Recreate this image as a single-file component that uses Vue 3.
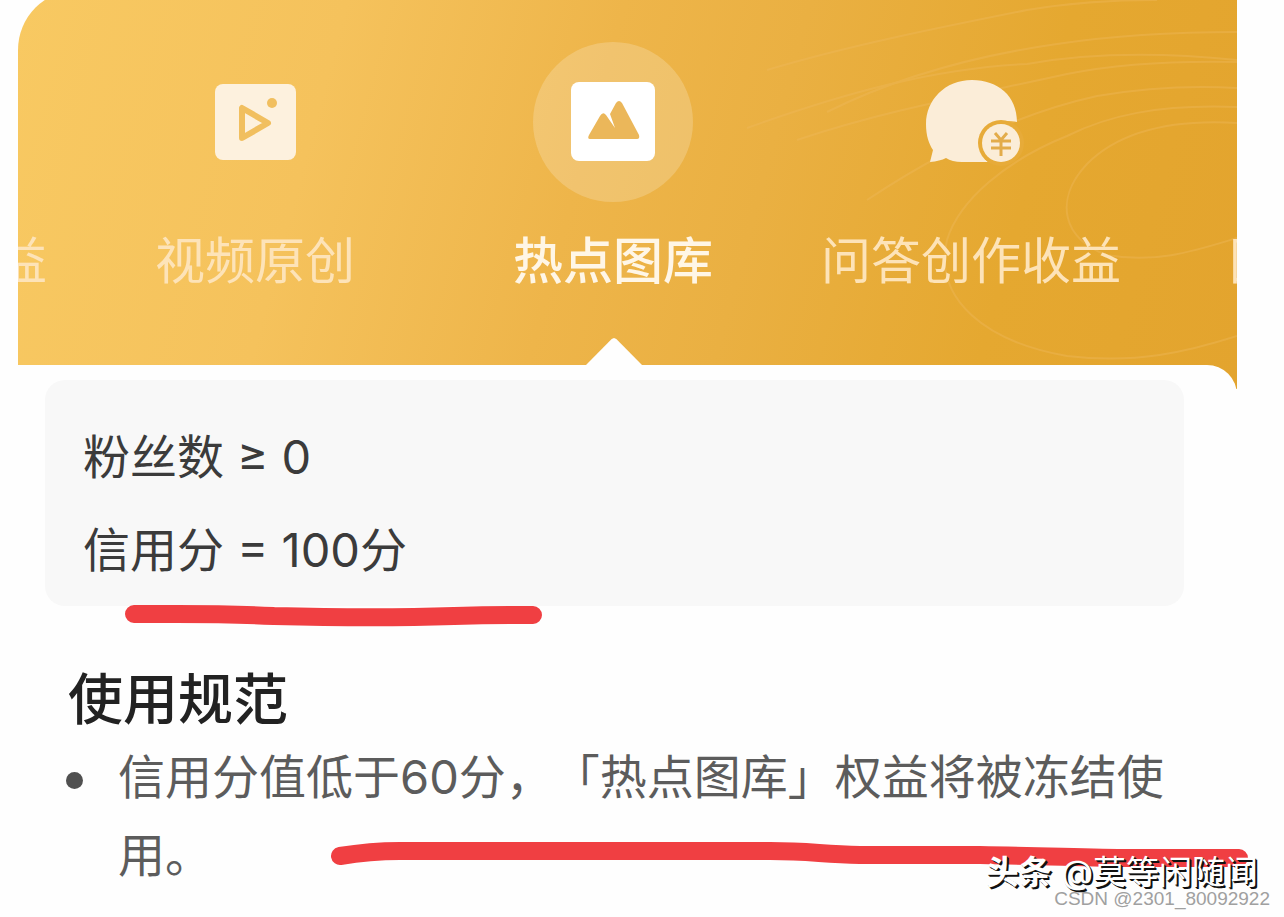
<template>
  <div class="page">
    <nav class="hero">
      <svg class="rings" viewBox="0 0 500 390" aria-hidden="true">
        <path d="M30 70C110 46 200 28 290 10Q350 0 420 0" />
        <path d="M90 112C170 72 250 54 320 44Q400 32 500 32" />
        <path d="M10 128C110 92 200 68 290 64Q380 48 500 60" />
        <path d="M60 140C150 110 230 96 330 74Q400 60 500 62" />
        <path d="M130 200C190 160 270 116 360 96Q430 84 500 88" />
        <path d="M500 107C420 104 370 116 330 136C270 160 222 200 210 240C196 300 250 342 330 356C400 364 450 352 500 336" />
        <path d="M500 123C430 119 380 134 350 164C316 200 326 240 370 255C420 264 460 250 500 238" />
      </svg>
      <div class="tabs">
        <button type="button" class="tab tab-prev">益</button>
        <button
          v-for="tab in tabs"
          :key="tab.id"
          type="button"
          class="tab"
          :class="{ active: tab.id === current }"
          @click="current = tab.id"
        >
          <span class="icon">
            <svg v-if="tab.id === 'video'" viewBox="0 0 160 160" aria-hidden="true">
              <rect x="40" y="42" width="81" height="76" rx="8" fill="#fdf1de" />
              <path d="M67 66V96L93 81Z" fill="none" stroke="#f1bf5f" stroke-width="6" stroke-linejoin="round" />
              <circle cx="97" cy="61" r="5" fill="#f1bf5f" />
            </svg>
            <svg v-else-if="tab.id === 'gallery'" viewBox="0 0 160 160" aria-hidden="true">
              <rect x="38" y="40" width="84" height="79" rx="8" fill="#fff" />
              <path d="M57 97Q54 97 56 93L67 74Q70 69 73 73L82 86L77 72L83 61Q86 57 89 61L106 93Q107 97 104 97Z" fill="#ebb75a" />
            </svg>
            <svg v-else viewBox="1 2 160 160" aria-hidden="true">
              <path d="M82 40C55 40 36 60 36 84C36 96 39 104 43 110L40 122Q50 121 56 118Q62 122 72 122H98C86 112 88 81 113 81Q123 81 127 82C127 56 108 40 82 40Z" fill="#fbedd8" />
              <circle cx="111" cy="103" r="23" fill="#e7ab39" />
              <circle cx="111" cy="103" r="19" fill="#fbedd8" />
              <path d="M105 93L111 100L117 93M101 101H121M101 108H121M111 100V116" fill="none" stroke="#e3ac4a" stroke-width="3" />
            </svg>
          </span>
          <span class="label">{{ tab.label }}</span>
        </button>
        <button type="button" class="tab tab-next">图</button>
      </div>
    </nav>

    <main class="sheet">
      <section class="panel">
        <p v-for="item in conditions" :key="item">{{ item }}</p>
        <svg class="mark mark-score" viewBox="0 0 420 24" aria-hidden="true">
          <path d="M10 11C60 11 90 10 150 13C230 15 270 15 330 13Q370 12 409 12" />
        </svg>
      </section>

      <section class="rules">
        <h2>使用规范</h2>
        <ul>
          <li v-for="rule in rules" :key="rule">{{ rule }}</li>
        </ul>
        <svg class="mark mark-rule" viewBox="0 0 920 30" aria-hidden="true">
          <path d="M10 16Q40 11 70 11H440C480 11 490 14 530 15H650C720 16 760 18 800 18H909" />
        </svg>
      </section>
    </main>

    <footer class="credit">
      <span class="author"><b>头条</b> @莫等闲随闻</span>
      <span class="source">CSDN @2301_80092922</span>
    </footer>
  </div>
</template>

<script setup>
import { ref } from 'vue'

const current = ref('gallery')

const tabs = [
  { id: 'video', label: '视频原创' },
  { id: 'gallery', label: '热点图库' },
  { id: 'answer', label: '问答创作收益' }
]

const conditions = ['粉丝数 ≥ 0', '信用分 = 100分']

const rules = ['信用分值低于60分，「热点图库」权益将被冻结使用。']
</script>

<style>
body {
  margin: 0;
  background: #fefefe;
}
</style>

<style scoped>
.page {
  position: relative;
  display: flow-root;
  box-sizing: border-box;
  min-height: 100vh;
  padding: 0 47px 0 18px;
  font-family: Inter, "Noto Sans CJK SC", sans-serif;
  text-spacing-trim: space-all;
}
.hero {
  position: relative;
  margin-top: -10px;
  padding: 52px 0 62px;
  overflow: hidden;
  border-top-left-radius: 60px;
  background: linear-gradient(105deg, #f8c962 0%, #f5c25c 25%, #eeb54a 46%, #eab042 60%, #e5a830 80%, #e3a42e 100%);
}
.rings {
  position: absolute;
  top: 10px;
  right: 0;
  width: 500px;
  height: 390px;
  fill: none;
  stroke: #efb95c;
  stroke-width: 2;
  opacity: .4;
}
.tabs {
  position: relative;
  display: grid;
  grid-template-columns: 58px 1fr 1fr 1fr 87px;
  height: 285px;
}
.tab {
  display: flex;
  flex-direction: column;
  align-items: center;
  justify-content: flex-end;
  gap: 24px;
  min-width: 0;
  padding: 0 0 31px;
  border: 0;
  background: none;
  color: #fde3b8;
  font-family: inherit;
  font-size: 50px;
  line-height: 70px;
  white-space: nowrap;
  cursor: pointer;
}
.tab-prev {
  align-items: flex-end;
  padding-right: 29px;
}
.tab-next {
  align-items: flex-start;
  padding-left: 79px;
}
.icon {
  width: 160px;
  height: 160px;
  border-radius: 50%;
}
.icon svg {
  display: block;
  width: 100%;
  height: 100%;
}
.active {
  color: #fff6e6;
  font-weight: 500;
}
.active .icon {
  background: rgba(255, 255, 255, .2);
}
.sheet {
  position: relative;
  margin-top: -24px;
  padding: 15px 53px 0 27px;
  border-top-right-radius: 30px;
  background: #fefefe;
}
/* pointer under the selected tab */
.sheet::before {
  content: "";
  position: absolute;
  top: -27px;
  left: calc((100% - 29px) / 2);
  width: 58px;
  height: 28px;
  margin-left: -28px;
  background: #fefefe;
  clip-path: polygon(46% 4%, 50% 0, 54% 4%, 100% 100%, 0 100%);
}
.panel {
  position: relative;
  padding: 30px 38px 10px;
  border-radius: 20px;
  background: #f8f8f8;
  color: #3b3b3b;
  font-size: 47px;
  line-height: 93px;
}
.panel p {
  margin: 0;
}
.rules {
  position: relative;
  padding: 54px 0 0 23px;
}
.rules h2 {
  margin: 0;
  color: #222;
  font-size: 55px;
  font-weight: 500;
  line-height: 78px;
}
.rules ul {
  margin: 0;
  padding: 0;
  list-style: none;
}
.rules li {
  position: relative;
  margin-right: -20px;
  padding-left: 50px;
  color: #5c5c5c;
  font-size: 47px;
  line-height: 78px;
}
.rules li::before {
  content: "";
  position: absolute;
  top: 34px;
  left: -2px;
  width: 17px;
  height: 17px;
  border-radius: 50%;
  background: #505050;
}
.mark {
  position: absolute;
  fill: none;
  stroke: #f03f42;
  stroke-width: 18;
  stroke-linecap: round;
  stroke-linejoin: round;
}
.mark-score {
  bottom: -21px;
  left: 79px;
  width: 420px;
  height: 24px;
}
.mark-rule {
  right: -66px;
  bottom: 24px;
  width: 920px;
  height: 30px;
}
.credit {
  position: absolute;
  right: 14px;
  bottom: 8px;
  display: flex;
  flex-direction: column;
  align-items: flex-end;
  white-space: nowrap;
}
.author {
  margin-right: 12px;
  color: #fff;
  font-size: 33px;
  line-height: 34px;
  text-shadow: 1px 1px 0 #111, 2px 2px 0 #111;
}
.source {
  color: #a0a0a0;
  font-family: "Liberation Sans", sans-serif;
  font-size: 19px;
  line-height: 20px;
}
</style>
